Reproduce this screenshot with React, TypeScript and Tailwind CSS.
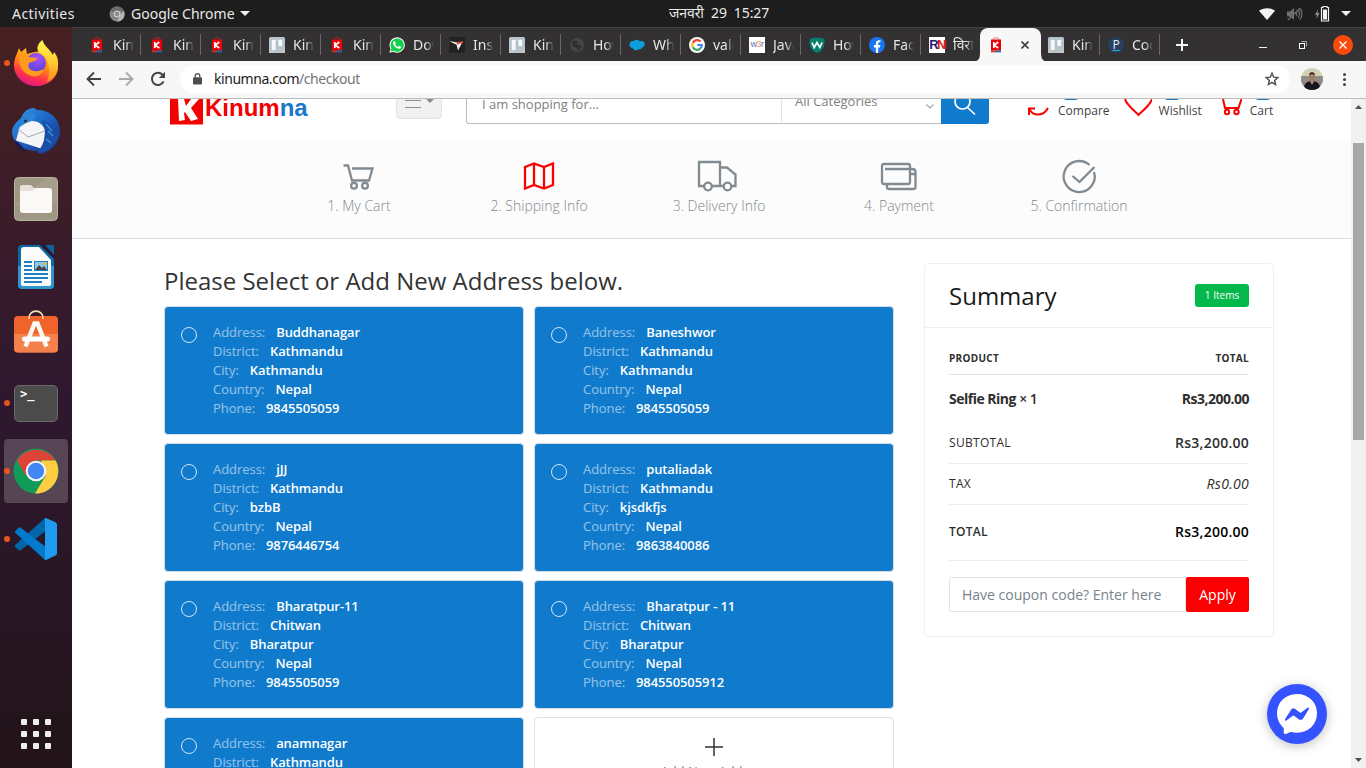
import React from "react";

type Address = { address: string; district: string; city: string; country: string; phone: string };

const addresses: Address[] = [
  { address: "Buddhanagar", district: "Kathmandu", city: "Kathmandu", country: "Nepal", phone: "9845505059" },
  { address: "Baneshwor", district: "Kathmandu", city: "Kathmandu", country: "Nepal", phone: "9845505059" },
  { address: "jJJ", district: "Kathmandu", city: "bzbB", country: "Nepal", phone: "9876446754" },
  { address: "putaliadak", district: "Kathmandu", city: "kjsdkfjs", country: "Nepal", phone: "9863840086" },
  { address: "Bharatpur-11", district: "Chitwan", city: "Bharatpur", country: "Nepal", phone: "9845505059" },
  { address: "Bharatpur - 11", district: "Chitwan", city: "Bharatpur", country: "Nepal", phone: "984550505912" },
  { address: "anamnagar", district: "Kathmandu", city: "Kathmandu", country: "Nepal", phone: "9845505059" },
];

/* ---------- favicons ---------- */

function KinumnaFav() {
  return (
    <svg width="16" height="16" viewBox="0 0 16 16">
      <path d="M4.500 2.500C5 .3 11 .3 11.500 2.500" fill="none" stroke="#d33" strokeOpacity=".6" strokeWidth="1" />
      <rect x="3" y="2.500" width="10" height="11" fill="#ee0008" />
      <rect x="3" y="13.500" width="5" height="1.800" fill="#c0392b" />
      <rect x="8" y="13.500" width="5" height="1.800" fill="#1b6bb5" />
      <path d="M5.800 5v6M10.300 5 6.300 8.200l4 2.800" stroke="#fff" strokeWidth="1.700" fill="none" />
    </svg>
  );
}

function TrelloFav() {
  return (
    <svg width="16" height="16" viewBox="0 0 16 16">
      <rect width="16" height="16" rx="1.500" fill="#b7c4cb" />
      <path d="M0 11 7 16H0zM11 16l5-6v6z" fill="#c9c6bd" />
      <rect x="2.300" y="2.300" width="4.800" height="11.200" rx="1" fill="#f4f8fa" stroke="#9fb3bd" strokeWidth=".6" />
      <rect x="8.900" y="2.300" width="4.800" height="7.200" rx="1" fill="#f4f8fa" stroke="#9fb3bd" strokeWidth=".6" />
    </svg>
  );
}

function WhatsappFav() {
  return (
    <svg width="16" height="16" viewBox="0 0 24 24">
      <path d="M.5 23.500 2.200 17.600A11.500 11.500 0 1 1 6.600 22z" fill="#fff" />
      <path d="M2.300 21.800 3.600 17A10 10 0 1 1 7 20.600z" fill="#12d14a" />
      <path
        d="M17.500 14.400c-.3-.2-1.800-.9-2-1-.3-.1-.5-.1-.7.2l-.9 1.100c-.2.2-.4.2-.7.1a8 8 0 0 1-4-3.500c-.3-.5.3-.5.9-1.600.1-.2 0-.4 0-.5L9.200 7c-.3-.6-.5-.5-.7-.5h-.6c-.2 0-.5.1-.8.4-.3.3-1 1-1 2.500s1.100 2.900 1.200 3.100c.1.2 2.100 3.200 5.100 4.500 1.900.8 2.600.9 3.500.7.6-.1 1.800-.7 2-1.400.3-.7.3-1.300.2-1.400z"
        fill="#fff"
      />
    </svg>
  );
}

function InsFav() {
  return (
    <svg width="16" height="16" viewBox="0 0 16 16">
      <rect width="16" height="16" fill="#222" />
      <path d="M0 4 8.500 5.500 8 8zM7.500 7.500l6-2.500L9 13.500z" fill="#f2f2f2" />
      <path d="M7 5.500 14.500 4l-1 2-5 1.500z" fill="#e5533d" />
    </svg>
  );
}

function GlobeFav() {
  return (
    <svg width="16" height="16" viewBox="0 0 16 16">
      <circle cx="8" cy="8" r="7" fill="#444546" />
      <path d="M3 5c2-1 3-2 5-1s-1 2 0 3 3 0 4 2-2 4-3 4-1-3-3-3-3-3-3-5z" fill="#2f2f30" />
    </svg>
  );
}

function CloudFav() {
  return (
    <svg width="16" height="16" viewBox="0 0 16 16">
      <g fill="#0c9ddb">
        <circle cx="4" cy="7.500" r="3.500" />
        <circle cx="7.500" cy="6" r="3.200" />
        <circle cx="12.300" cy="7.300" r="3.300" />
        <circle cx="7" cy="10" r="3.300" />
        <circle cx="10.500" cy="9.500" r="2.800" />
      </g>
    </svg>
  );
}

function GoogleFav() {
  return (
    <svg width="16" height="16" viewBox="0 0 16 16">
      <circle cx="8" cy="8" r="8" fill="#fff" />
      <g fill="none" strokeWidth="2.200">
        <path d="M11.600 4.600A4.800 4.800 0 0 0 3.800 5.700" stroke="#ea4335" />
        <path d="M3.800 5.700a4.800 4.800 0 0 0 0 4.600" stroke="#fbbc05" />
        <path d="M3.800 10.300a4.800 4.800 0 0 0 7.400 1.300" stroke="#34a853" />
        <path d="M11.200 11.600A4.800 4.800 0 0 0 12.800 8H8.200" stroke="#4285f4" />
      </g>
    </svg>
  );
}

function W3Fav() {
  return (
    <span className="flex h-4 w-4 items-center justify-center bg-white font-['Liberation_Sans'] text-[9px] leading-none tracking-[-0.5px] text-[#5c6bb5]">
      w<span className="text-[#ef8a4b]">3</span>r
    </span>
  );
}

function ShieldFav() {
  return (
    <svg width="16" height="16" viewBox="0 0 16 16">
      <path d="M.5 2C5 .2 11 .2 15.500 2c.3 7-1 11.500-7.500 14C1.500 13.500.2 9 .5 2z" fill="#067f6c" />
      <path d="M3 5.500 5.200 10.500 8 5.500l2.800 5 2.300-5" fill="none" stroke="#fff" strokeWidth="1.700" />
    </svg>
  );
}

function FacebookFav() {
  return (
    <svg width="16" height="16" viewBox="0 0 16 16">
      <circle cx="8" cy="8" r="8" fill="#1777f2" />
      <path d="M6.900 16v-5.600H4.900V8h2V6.300c0-2 1.200-3.100 3-3.100l1.600.1v2h-1c-1 0-1.300.6-1.300 1.200V8h2.200l-.4 2.400H9.200V16z" fill="#fff" />
    </svg>
  );
}

function RnFav() {
  return (
    <span className="flex h-4 w-4 items-center justify-center bg-white font-['Liberation_Sans'] text-[13px] leading-none font-bold tracking-[-1.6px] text-[#1a1d7c]">
      R<span className="text-[#e01b24]">N</span>
    </span>
  );
}

function PFav() {
  return (
    <span className="flex h-4 w-4 items-center justify-center rounded-full bg-[#26405f] font-['Open_Sans'] text-[12px] leading-none text-[#e6eef5] underline decoration-[#3fa9d8] underline-offset-1">
      P
    </span>
  );
}

const leftTabs: [() => React.JSX.Element, string][] = [
  [KinumnaFav, "Kinu"],
  [KinumnaFav, "Kinu"],
  [KinumnaFav, "Kinu"],
  [TrelloFav, "Kinu"],
  [KinumnaFav, "Kinu"],
  [WhatsappFav, "Dow"],
  [InsFav, "Ins"],
  [TrelloFav, "Kinu"],
  [GlobeFav, "How"],
  [CloudFav, "Wha"],
  [GoogleFav, "valu"],
  [W3Fav, "Java"],
  [ShieldFav, "How"],
  [FacebookFav, "Face"],
  [RnFav, "विराट"],
];

function Tab({ Icon, label, last = false }: { Icon: () => React.JSX.Element; label: string; last?: boolean }) {
  return (
    <div className="flex h-[21px] w-[60px] shrink-0 items-center">
      <div className="flex flex-1 items-center pl-2">
        <Icon />
        <span className="ml-[8px] w-[21px] overflow-hidden font-['Noto_Sans'] text-[14px] leading-5 whitespace-nowrap text-[#e6e6e6] [mask-image:linear-gradient(to_right,black_60%,transparent)]">
          {label}
        </span>
      </div>
      <div className={last ? "h-full w-px" : "h-full w-px bg-[#6a6869]"} />
    </div>
  );
}

function TabStrip() {
  return (
    <div className="flex h-[34px] items-center border-t border-[#454344] bg-[#333132] pl-[9px]">
      {leftTabs.map(([Icon, label], i) => (
        <Tab key={i} Icon={Icon} label={label} last={i === leftTabs.length - 1} />
      ))}
      <div className="relative -ml-px -mr-px flex h-[34px] w-[61px] shrink-0 items-center rounded-t-lg bg-[#f7f7f7] pl-[8px]">
        <svg className="absolute bottom-0 -left-2" width="8" height="8" viewBox="0 0 8 8">
          <path d="M0 8q8 0 8-8v8z" fill="#f7f7f7" />
        </svg>
        <svg className="absolute -right-2 bottom-0" width="8" height="8" viewBox="0 0 8 8">
          <path d="M8 8Q0 8 0 0v8z" fill="#f7f7f7" />
        </svg>
        <KinumnaFav />
        <svg className="ml-[17px]" width="8" height="8" viewBox="0 0 8 8">
          <path d="M.5.5l7 7M7.500.5l-7 7" stroke="#3c4043" strokeWidth="1.600" />
        </svg>
      </div>
      <Tab Icon={TrelloFav} label="Kinu" />
      <Tab Icon={PFav} label="Cod" />
      <svg className="ml-[16px]" width="12" height="12" viewBox="0 0 12 12">
        <path d="M6 0v12M0 6h12" stroke="#f5f5f5" strokeWidth="2" />
      </svg>
      <div className="ml-auto flex items-center pr-[13px]">
        <span className="mt-[6px] h-px w-2 bg-[#f2f2f2]" />
        <svg className="ml-[32px]" width="8" height="8" viewBox="0 0 8 8">
          <path d="M2.500.5h5v5" fill="none" stroke="#aaa" strokeWidth="1" />
          <rect x=".5" y="2.500" width="5" height="5" fill="none" stroke="#fff" strokeWidth="1" />
        </svg>
        <span className="ml-[26px] flex h-5 w-5 items-center justify-center rounded-full bg-[#fb4a0a]">
          <svg width="8" height="8" viewBox="0 0 8 8">
            <path d="M.5.5l7 7M7.500.5l-7 7" stroke="#fff" strokeWidth="1.300" />
          </svg>
        </span>
      </div>
    </div>
  );
}

function Toolbar() {
  return (
    <div className="flex h-[38px] items-center border-b border-[#bdbdbd] bg-[#f7f7f7] pb-px">
      <svg className="ml-[14px]" width="16" height="16" viewBox="0 0 16 16" fill="none" stroke="#444" strokeWidth="1.900">
        <path d="M15 8H2M8 1.500 1.500 8 8 14.500" />
      </svg>
      <svg className="ml-[16px]" width="16" height="16" viewBox="0 0 16 16" fill="none" stroke="#a9a9a9" strokeWidth="1.900">
        <path d="M1 8h13M8 1.500 14.500 8 8 14.500" />
      </svg>
      <svg className="ml-[16px]" width="16" height="16" viewBox="0 0 16 16">
        <path d="M13.600 10.400A6.100 6.100 0 1 1 12.500 3.700L14 5.300" fill="none" stroke="#444" strokeWidth="2" />
        <path d="M15 .8V7H8.800z" fill="#444" />
      </svg>
      <div className="ml-[14px] flex h-7 w-[1110px] items-center rounded-full bg-white">
        <svg className="ml-[13px]" width="9" height="12" viewBox="0 0 9 12">
          <rect y="4.200" width="9" height="7.300" rx="1" fill="#4d4d4d" />
          <path d="M2.200 4.500V3a2.300 2.300 0 0 1 4.600 0v1.500" fill="none" stroke="#4d4d4d" strokeWidth="1.200" />
        </svg>
        <span className="ml-[12px] font-['Noto_Sans'] text-[14px] leading-5 tracking-[-0.45px] text-[#1b1b1b]">
          kinumna.com<span className="text-[#747474]">/checkout</span>
        </span>
        <svg className="mr-[11px] ml-auto" width="14" height="14" viewBox="0 0 14 14">
          <path d="M7 1.300 8.700 5.200l4.100.4-3.100 2.800.9 4.100L7 10.300l-3.600 2.200.9-4.100L1.200 5.600l4.100-.4z" fill="none" stroke="#4a4a4a" strokeWidth="1.400" />
        </svg>
      </div>
      <svg className="ml-[11px]" width="22" height="22" viewBox="0 0 22 22">
        <defs>
          <clipPath id="avatar">
            <circle cx="11" cy="11" r="11" />
          </clipPath>
        </defs>
        <g clipPath="url(#avatar)">
          <rect width="22" height="22" fill="#d6d0b2" />
          <rect y="8" width="22" height="14" fill="#8f8d84" />
          <path d="M3 22c-1-7 4-9 8-9s9 2 8 9z" fill="#17151d" />
          <path d="M8.500 12.500h5L11 17z" fill="#b08a74" />
          <ellipse cx="11" cy="9" rx="2.800" ry="4.200" fill="#a07b66" />
          <path d="M8 7.500c-.5-4.500 6.500-4.500 6 0-1-2-5-2-6 0z" fill="#221d1c" />
        </g>
      </svg>
      <div className="ml-[20px] flex flex-col gap-[2px]">
        <span className="h-[3px] w-[3px] rounded-full bg-[#444]" />
        <span className="h-[3px] w-[3px] rounded-full bg-[#444]" />
        <span className="h-[3px] w-[3px] rounded-full bg-[#444]" />
      </div>
    </div>
  );
}

/* ---------- desktop ---------- */

function TopBar() {
  return (
    <div className="relative flex h-[27px] items-center bg-[#1d1d1d] font-['Noto_Sans'] text-[14px] leading-5 text-[#e9e9e9]">
      <span className="ml-3 w-[97px] tracking-[0.45px]">Activities</span>
      <svg width="16" height="16" viewBox="0 0 16 16">
        <circle cx="8" cy="8" r="7.500" fill="#858585" />
        <path d="M8 8 1.500 4.500A7.500 7.500 0 0 1 15 5H8z" fill="#6d6d6d" />
        <path d="M8 15.500 11 9l4-4a7.500 7.500 0 0 1-7 10.500z" fill="#b3b3b3" />
        <circle cx="8" cy="8" r="3" fill="#8d8d8d" stroke="#dcdcdc" strokeWidth="1" />
      </svg>
      <span className="ml-[6px] tracking-[0.02px]">Google Chrome</span>
      <svg className="ml-[5px]" width="10" height="5" viewBox="0 0 10 5">
        <path d="M0 0h10L5 5z" fill="#f0f0f0" />
      </svg>
      <span className="absolute top-[3px] left-[669px] font-['Noto_Sans','Noto_Sans_Devanagari',sans-serif] text-[14px] tracking-[-0.1px] whitespace-pre">
        जनवरी  29  15:27
      </span>
      <div className="ml-auto flex items-center pr-[15px]">
        <svg width="16" height="12" viewBox="0 0 16 12">
          <path d="M0 2.800C4-.7 12-.7 16 2.800L8 12z" fill="#f2f2f2" />
        </svg>
        <svg className="ml-[12px]" width="16" height="14" viewBox="0 0 16 14" fill="none" stroke="#6e6e6e">
          <path d="M0 4.500h3L7 1v12L3 9.500H0z" fill="#6e6e6e" stroke="none" />
          <path d="M9 5c1 1 1 3 0 4M11 3c2 2 2 6 0 8M13 1.500c2.500 3 2.500 8 0 11M1 13 13 1" strokeWidth="1.200" />
        </svg>
        <svg className="ml-[12px]" width="15" height="16" viewBox="0 0 15 16">
          <path d="M3 3 0 9h2l-.5 4L4.500 7h-2z" fill="#8e8e8e" />
          <path d="M8 .5h4v1h1.500v13.500h-7V1.500H8z" fill="none" stroke="#f2f2f2" strokeWidth="1.200" />
          <rect x="8" y="3.500" width="4" height="10" fill="#f2f2f2" />
        </svg>
        <svg className="ml-[11px]" width="10" height="5" viewBox="0 0 10 5">
          <path d="M0 0h10L5 5z" fill="#f0f0f0" />
        </svg>
      </div>
    </div>
  );
}

function FirefoxIcon() {
  return (
    <svg width="46" height="46" viewBox="0 0 46 46">
      <defs>
        <linearGradient id="ffa" x1=".8" y1="0" x2=".35" y2="1">
          <stop offset="0" stopColor="#ffd43a" />
          <stop offset=".45" stopColor="#ff9010" />
          <stop offset=".75" stopColor="#ff3647" />
          <stop offset="1" stopColor="#e31587" />
        </linearGradient>
        <radialGradient id="ffb" cx=".6" cy=".25" r=".8">
          <stop offset="0" stopColor="#a94fff" />
          <stop offset="1" stopColor="#4f45d2" />
        </radialGradient>
        <linearGradient id="ffc" x1=".5" y1="0" x2=".5" y2="1">
          <stop offset="0" stopColor="#fff44f" />
          <stop offset=".5" stopColor="#ffd030" />
          <stop offset="1" stopColor="#ff8a1e" />
        </linearGradient>
      </defs>
      <path d="M1 25C1 19 4 14 6 8l2 4 5-4 1 6c4-1 14-4 18-2l8 4c3 3 5 6 5 11 0 11-10 19-22 19S1 37 1 25z" fill="url(#ffa)" />
      <path d="M27 13c-5-4-2-10 2.500-13 1 4 3.500 6 6 9 2 2 3 4 4.500 6l1-3c4 5 4.500 9 4 15-1 8-6 13-11 15 4-11 3-24-7-29z" fill="url(#ffc)" />
      <circle cx="23" cy="23" r="10" fill="url(#ffb)" />
      <path d="M6 17c3-3 7-3 10 0l8 1c0 3-6 4-8 5-2 4 1 8 6 8 4 1 6-2 9-1-3 6-9 8-15 5-7-3-10-9-10-18z" fill="#ff9a1f" />
    </svg>
  );
}

function ThunderbirdIcon() {
  return (
    <svg width="48" height="48" viewBox="0 0 48 48">
      <defs>
        <linearGradient id="tba" x1="0" y1="0" x2="1" y2="1">
          <stop offset="0" stopColor="#2f9be8" />
          <stop offset=".5" stopColor="#1d62c4" />
          <stop offset="1" stopColor="#15296f" />
        </linearGradient>
      </defs>
      <path d="M9 11C12 3 18 1 22 1l3 2c12-1 23 9 23 21 0 11-8 21-20 23l-3-3C12 44 0 36 0 25c0-5 4-10 9-14z" fill="url(#tba)" />
      <path d="M2 33c5 2 9 7 12 12-6-1-10-6-12-12z" fill="#221a52" />
      <path d="M8 19 4 33.500l28 9L33 23c-2-5-6-9-13-9-6 0-9 2-12 5z" fill="#f5f5f7" />
      <path d="m6 22 10 8 17-6" fill="none" stroke="#a8a8ad" strokeWidth="1" />
      <path d="M8 20C7 9 16 5 22 6c5 3 0 7-5 9-4 1-6 3-9 5z" fill="#2a83d5" />
      <circle cx="13.500" cy="14" r="1.500" fill="#25304c" />
      <path d="M30 13c5 11 4 22-5 33 13-1 22-10 23-24-2 5-3 7-5 8 0-8-4-14-13-17z" fill="#1b4ea5" />
      <path d="M34 17l6 7M36 24l5 5M34 32l5 4" stroke="#3a9ae0" strokeWidth="1.200" />
    </svg>
  );
}

function FilesIcon() {
  return (
    <svg width="46" height="46" viewBox="0 0 46 46">
      <rect x="1.500" y="1.500" width="43" height="43" rx="4" fill="#9e9784" stroke="#b9b3a2" strokeWidth="1" />
      <path d="M2 30 32 2h9a3 3 0 0 1 3 3v20z" fill="#a69f8d" />
      <path d="M7 11q0-2 2-2h9l3 3h3v8H7z" fill="#e6e2da" />
      <path d="M7 15h12l4-3h13q3 0 3 3v19q0 3-3 3H10q-3 0-3-3z" fill="#faf9f7" />
    </svg>
  );
}

function WriterIcon() {
  return (
    <svg width="38" height="46" viewBox="0 0 38 46">
      <rect x="1" y="1" width="36" height="44" rx="4" fill="#0d6aa0" />
      <path d="M1 22h36v19a4 4 0 0 1-4 4H5a4 4 0 0 1-4-4z" fill="#2e97cf" />
      <path d="M7 3h15l12 13v24q0 2-2 2H6q-2 0-2-2V6q0-3 3-3z" fill="#fbfbfb" />
      <path d="M22 0h6l10 11v5z" fill="#2b1830" />
      <path d="M28 1h9v10z" fill="#0e6396" />
      <g fill="#1c7fc0">
        <rect x="7" y="17" width="8" height="2" />
        <rect x="7" y="21" width="8" height="2" />
        <rect x="7" y="25" width="8" height="2" />
        <rect x="7" y="29" width="24" height="2" />
        <rect x="7" y="33" width="24" height="2" />
        <rect x="7" y="37" width="18" height="2" />
        <rect x="17" y="17" width="14" height="10" />
      </g>
      <rect x="18" y="18" width="12" height="8" fill="#8ec9ec" />
      <path d="m18 26 4-5 3 3 2-2 3 4z" fill="#444" />
      <circle cx="28" cy="19.500" r="1.500" fill="#f3b51b" />
    </svg>
  );
}

function SoftwareIcon() {
  return (
    <svg className="mb-[8px]" width="46" height="46" viewBox="0 0 46 46">
      <rect x="1" y="8" width="44" height="36.500" rx="4" fill="#f0642b" />
      <path d="M1 26h44v14.500a4 4 0 0 1-4 4H5a4 4 0 0 1-4-4z" fill="#f4814c" />
      <path d="M16 11C15 .5 31 .5 30 11" fill="none" stroke="#f5dfb0" strokeWidth="1.600" />
      <path d="m12.500 38.500 9-23h3l9 23" fill="none" stroke="#fbf7f3" strokeWidth="4.500" />
      <rect x="9" y="28.500" width="28" height="5" rx="2.500" fill="#fff" />
    </svg>
  );
}

function TerminalIcon() {
  return (
    <div className="h-[37px] w-11 rounded-[5px] border border-[#6b6b6b] bg-[#4b4b4b] pl-[5px] font-['DejaVu_Sans_Mono'] text-[12px] leading-[17px] font-bold text-white">
      &gt;_
    </div>
  );
}

function ChromeIcon() {
  return (
    <svg width="46" height="46" viewBox="0 0 46 46">
      <circle cx="23" cy="23" r="22.500" fill="#119b58" />
      <path d="M4 12.500A22.500 22.500 0 0 1 42.500 12.500H23L13 28z" fill="#db4437" />
      <path d="M42.700 12.500A22.500 22.500 0 0 1 22 45.500L32.500 28 28 12.500z" fill="#ffcd40" />
      <circle cx="23" cy="23" r="10.300" fill="#f4f4f4" />
      <circle cx="23" cy="23" r="8.200" fill="#4285f4" />
    </svg>
  );
}

function VsCodeIcon() {
  return (
    <svg width="44" height="44" viewBox="0 0 44 44">
      <path d="M31 1 1.500 27.500a1.500 1.500 0 0 0 0 2.500l3 3q1 1 2.300 0L33 13z" fill="#0065a9" />
      <path d="M31 43 1.500 16a1.500 1.500 0 0 1 0-2.300l3-3q1-1 2.300 0L33 31z" fill="#007acc" />
      <path d="M32 1q-2 0-1 3v36q-1 3 1 3l9.500-4.500q1.500-1 1.500-2V7.500q0-1.500-1.500-2.200z" fill="#1f9cf0" />
    </svg>
  );
}

const dockItems: { Icon: () => React.JSX.Element; running?: boolean; active?: boolean }[] = [
  { Icon: FirefoxIcon, running: true },
  { Icon: ThunderbirdIcon },
  { Icon: FilesIcon },
  { Icon: WriterIcon },
  { Icon: SoftwareIcon },
  { Icon: TerminalIcon, running: true },
  { Icon: ChromeIcon, running: true, active: true },
  { Icon: VsCodeIcon, running: true },
];

function Dock() {
  return (
    <div className="flex w-[72px] shrink-0 flex-col bg-linear-to-b from-[#472021] via-[#2f182f] to-[#221419] pt-[2px]">
      {dockItems.map(({ Icon, running, active }, i) => (
        <div key={i} className="flex h-[68px] w-full items-center justify-center">
          <div
            className={
              active
                ? "relative flex h-16 w-16 items-center justify-center rounded bg-white/20"
                : "relative flex h-16 w-16 items-center justify-center"
            }
          >
            {running && <span className="absolute left-0 h-[6px] w-[6px] rounded-full bg-[#e95420]" />}
            <Icon />
          </div>
        </div>
      ))}
      <div className="mt-auto mb-[19px] grid grid-cols-3 gap-[6px] self-center">
        {Array.from({ length: 9 }, (_, i) => (
          <span key={i} className="h-[6px] w-[6px] rounded-[1px] bg-[#eeeeec]" />
        ))}
      </div>
    </div>
  );
}

/* ---------- page ---------- */

function SiteHeader() {
  return (
    <div className="flex h-[41px] items-start overflow-hidden bg-white pl-[98px]">
      <svg width="33" height="26" viewBox="0 0 33 26">
        <path d="M0 0h33v25.500H0z" fill="#f30000" />
        <path d="M8 0h6l2 7 5-7h8l-8 9 7 11-7 2-6-9-1 1 1 7-6 1z" fill="#fff" />
      </svg>
      <span className="-mt-[5px] ml-[2px] w-[191px] font-['Liberation_Sans'] text-[24px] leading-[27px] font-bold text-[#f30000]">
        Kinum<span className="text-[#1879c9]">na</span>
      </span>
      <div className="-mt-5 flex h-10 w-[46px] items-end justify-center gap-[5px] rounded border border-[#e4e4e4] bg-[#f1f1f1] pb-[10px]">
        <span className="h-[8px] w-4 border-y-[1.5px] border-[#8c8c8c]" />
        <svg className="mb-[5px]" width="8" height="4" viewBox="0 0 8 4">
          <path d="M0 0h8L4 4z" fill="#8c8c8c" />
        </svg>
      </div>
      <div className="-mt-5 ml-6 flex h-[45px] w-[523px] font-['Open_Sans'] text-[13px] leading-5 text-[#818181]">
        <div className="flex w-[315px] items-end rounded-bl-[3px] border border-r-0 border-[#bbb] pb-[9px] pl-[15px]">I am shopping for...</div>
        <div className="flex w-[160px] items-end border-b border-l border-b-[#bbb] border-l-[#e4e4e4] pb-[12px] pl-[13px]">
          All Categories
          <svg className="mb-[2px] ml-auto mr-[7px]" width="8" height="5" viewBox="0 0 8 5">
            <path d="M.5.5 4 4 7.500.5" fill="none" stroke="#a5a5a5" strokeWidth="1.200" />
          </svg>
        </div>
        <div className="flex w-12 items-end justify-center rounded-r-[3px] bg-[#107acc] pb-[8px]">
          <svg width="22" height="22" viewBox="0 0 22 22" fill="none" stroke="#fff" strokeWidth="1.700">
            <circle cx="8.500" cy="7.500" r="7.500" />
            <path d="m13.500 13.500 7.500 7" />
          </svg>
        </div>
      </div>
      <div className="flex pl-[38px] font-['Open_Sans'] text-[12px] leading-6 text-[#3f3f3f]">
        <svg width="23" height="18" viewBox="0 0 23 18" fill="none" stroke="#fb0000" strokeWidth="2">
          <path d="M2 16V9.500H8M2.500 10.500c4 7 14 7 18.500-1.500" />
        </svg>
        <HeaderLabel text="Compare" />
      </div>
      <div className="flex pl-[15px] font-['Open_Sans'] text-[12px] leading-6 text-[#3f3f3f]">
        <svg className="-mr-px -ml-px" width="28" height="18" viewBox="0 0 28 18" fill="none" stroke="#fb0000" strokeWidth="2">
          <path d="M1 0C2 5 10.500 12 14.500 16 18.500 12 27 5 28 0" />
        </svg>
        <HeaderLabel text="Wishlist" />
      </div>
      <div className="flex pl-[20px] font-['Open_Sans'] text-[12px] leading-6 text-[#3f3f3f]">
        <svg width="20" height="18" viewBox="0 0 20 18" fill="none" stroke="#fb0000" strokeWidth="2">
          <path d="M1 0l2 9h13.500l3-9" />
          <circle cx="5" cy="13" r="2.200" />
          <circle cx="14.500" cy="13" r="2.200" />
        </svg>
        <HeaderLabel text="Cart" />
      </div>
    </div>
  );
}

function HeaderLabel({ text }: { text: string }) {
  return (
    <span className="relative ml-2">
      <span className="absolute -top-[14px] left-[4px] h-[15px] w-[18px] rounded-[5px] bg-[#107acc]" />
      {text}
    </span>
  );
}

const steps: { label: string; active?: boolean; icon: React.ReactNode }[] = [
  {
    label: "1. My Cart",
    icon: (
      <>
        <path d="M4.500 7.500h4.500l4 15h17l3.500-12H13" />
        <circle cx="15" cy="27.800" r="2.900" />
        <circle cx="26" cy="27.800" r="2.900" />
      </>
    ),
  },
  { label: "2. Shipping Info", active: true, icon: <path d="M6 9l9-3.500L25 9l9-3.500V27L25 30.500 15 27l-9 3.500zM15 5.500V27M25 9v21" /> },
  {
    label: "3. Delivery Info",
    icon: (
      <>
        <path d="M6 28H0V4h21v24H12M21 28h4M21 9.500h7l8.500 7V28h-4" />
        <circle cx="9" cy="28.500" r="3.800" />
        <circle cx="28.500" cy="28.500" r="3.800" />
      </>
    ),
  },
  {
    label: "4. Payment",
    icon: (
      <>
        <rect x="3" y="6" width="28" height="20" rx="2" />
        <path d="M6 11h27q3.500 0 3.500 3v15q0 2-2 2H10q-2 0-2-2v-3M31 16h5" />
      </>
    ),
  },
  {
    label: "5. Confirmation",
    icon: (
      <>
        <path d="M30.500 7A15.500 15.500 0 1 0 35 14M13.500 18l7 6L35.500 9" />
      </>
    ),
  },
];

function Steps() {
  return (
    <div className="flex h-[99px] border-b border-[#dcdfe6] bg-[#fcfcfc] pl-[197px]">
      {steps.map((s) => (
        <div key={s.label} className="flex w-[180px] flex-col items-center pt-[18px]">
          <svg
            className={s.active ? "text-[#fb0000]" : "text-[#818a91]"}
            width="40"
            height="36"
            viewBox="0 0 40 36"
            overflow="visible"
            fill="none"
            stroke="currentColor"
            strokeWidth="2.300"
          >
            {s.icon}
          </svg>
          <span className="mt-px font-['Open_Sans'] text-[14px] leading-[22px] font-light text-[#818a91]">{s.label}</span>
        </div>
      ))}
    </div>
  );
}

function Field({ name, value }: { name: string; value: string }) {
  return (
    <div className="flex h-[19px] items-center">
      <span className="tracking-[-0.05px] text-white/55">{name}:</span>
      <span className="ml-[11px] font-semibold tracking-[-0.1px] text-white">{value}</span>
    </div>
  );
}

function AddressCard({ a }: { a: Address }) {
  return (
    <div className="flex h-[129px] w-[360px] rounded-[4px] border border-[#d5dce6] bg-[#107acc] pt-4 pl-4">
      <span className="mt-1 h-4 w-4 shrink-0 rounded-full border border-white/80" />
      <div className="ml-4 font-['Open_Sans'] text-[13px] leading-[19px]">
        <Field name="Address" value={a.address} />
        <Field name="District" value={a.district} />
        <Field name="City" value={a.city} />
        <Field name="Country" value={a.country} />
        <Field name="Phone" value={a.phone} />
      </div>
    </div>
  );
}

function Summary() {
  return (
    <div className="mt-6 h-[374px] w-[350px] shrink-0 rounded-[4px] border border-[#f0f0f0] font-['Open_Sans']">
      <div className="flex h-16 items-center justify-between border-b border-[#f0f0f0] px-6">
        <span className="text-[24px] leading-8 text-[#1a1a1a]">Summary</span>
        <span className="flex h-[23px] w-[54px] items-center justify-center rounded-[3px] bg-[#05b84b] text-[10px] text-white">1 Items</span>
      </div>
      <div className="px-6 text-[#2e2e2e]">
        <div className="flex h-[47px] items-center justify-between border-b border-[#e4e4e4] pt-[14px] text-[10px] font-bold tracking-[0.3px]">
          <span>PRODUCT</span>
          <span>TOTAL</span>
        </div>
        <div className="flex h-12 items-center justify-between pb-[2px] text-[14px] font-bold tracking-[-0.5px]">
          <span>
            Selfie Ring <span className="font-semibold">× 1</span>
          </span>
          <span>Rs3,200.00</span>
        </div>
        <div className="flex h-[41px] items-center justify-between border-b border-[#ededed] text-[12px]">
          <span className="tracking-[0.3px]">SUBTOTAL</span>
          <span className="-mt-[2px] text-[14px] font-semibold tracking-[0.25px]">Rs3,200.00</span>
        </div>
        <div className="flex h-[41px] items-center justify-between border-b border-[#ededed] text-[12px]">
          <span className="tracking-[0.3px]">TAX</span>
          <span className="-mt-[2px] text-[14px] tracking-[0.3px] italic">Rs0.00</span>
        </div>
        <div className="flex h-14 items-center justify-between border-b border-[#ededed] pb-[2px] text-[12px] font-semibold">
          <span className="tracking-[0.25px]">TOTAL</span>
          <span className="text-[14px] tracking-[0.25px] text-black">Rs3,200.00</span>
        </div>
        <div className="mt-4 flex h-[35px] text-[14px]">
          <div className="flex flex-1 items-center rounded-l-[2px] border border-[#e4e4e4] pl-3 text-[#78828a]">Have coupon code? Enter here</div>
          <div className="flex w-[63px] items-center justify-center rounded-[2px] bg-[#fb0000] text-white">Apply</div>
        </div>
      </div>
    </div>
  );
}

function CheckoutPage() {
  return (
    <div className="relative min-w-0 flex-1 overflow-hidden bg-white">
      <SiteHeader />
      <Steps />
      <div className="flex gap-[30px] pl-[92px]">
        <div className="w-[730px] shrink-0">
          <h1 className="mt-[25px] mb-[8px] font-['Open_Sans'] text-[24px] leading-[34px] whitespace-nowrap text-[#333]">
            Please Select or Add New Address below.
          </h1>
          <div className="grid grid-cols-2 gap-x-[10px] gap-y-2">
            {addresses.map((a, i) => (
              <AddressCard key={i} a={a} />
            ))}
            <div className="flex h-[129px] w-[360px] flex-col items-center rounded-[4px] border border-[#dfe0e6] bg-white pt-5">
              <svg width="18" height="18" viewBox="0 0 18 18">
                <path d="M9 0v18M0 9h18" stroke="#333" strokeWidth="1.500" />
              </svg>
              <span className="mt-[5px] font-['Open_Sans'] text-[13px] leading-5 text-[#8a817c]">Add New Address</span>
            </div>
          </div>
        </div>
        <Summary />
      </div>
      <div className="absolute top-[585px] left-[1195px] h-[60px] w-[60px] rounded-full bg-[#3552ff] shadow-[0_2px_12px_rgba(0,0,0,0.25)]">
        <svg width="60" height="60" viewBox="0 0 60 60">
          <path d="M30 10C18.500 10 10 18.300 10 29.300c0 5.800 2.400 10.700 6.200 14.100.5.5.5 1 .6 1.800v3.300c.1 1.300 1.100 1.900 2.200 1.400l3.800-1.700c.5-.2.9-.2 1.400-.1 1.800.5 3.700.7 5.800.7 11.500 0 20-8.300 20-19.500S41.500 10 30 10z" fill="#fff" />
          <path d="M18 35.200 23.900 25.900a3 3 0 0 1 4.300-.8l4.700 3.500q.7.500 1.300 0l6.300-4.800c1-.6 2 .4 1.400 1.300L36.100 34.400a3 3 0 0 1-4.400.8L27 31.700q-.6-.5-1.200 0l-6.400 4.800c-.9.6-1.900-.4-1.400-1.300z" fill="#3552ff" />
        </svg>
      </div>
    </div>
  );
}

function ScrollBar() {
  return (
    <div className="flex w-[15px] shrink-0 flex-col items-center bg-[#f1f1f1]">
      <svg className="mt-[6px]" width="7" height="4" viewBox="0 0 7 4">
        <path d="M0 4h7L3.500 0z" fill="#505050" />
      </svg>
      <div className="mt-[34px] h-[297px] w-[11px] bg-[#a8a8a8]" />
      <svg className="mt-auto mb-[6px]" width="7" height="4" viewBox="0 0 7 4">
        <path d="M0 0h7L3.500 4z" fill="#505050" />
      </svg>
    </div>
  );
}

export default function App() {
  return (
    <div className="flex h-[768px] w-[1366px] flex-col overflow-hidden bg-white">
      <TopBar />
      <div className="flex min-h-0 flex-1">
        <Dock />
        <div className="flex min-w-0 flex-1 flex-col">
          <TabStrip />
          <Toolbar />
          <div className="flex min-h-0 flex-1">
            <CheckoutPage />
            <ScrollBar />
          </div>
        </div>
      </div>
    </div>
  );
}
